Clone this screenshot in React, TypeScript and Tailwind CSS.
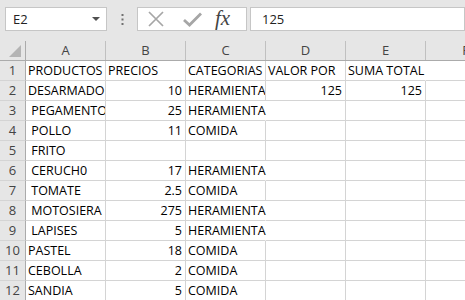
import React from "react";

type Cell = { t?: string; right?: boolean; clip?: boolean; noBorder?: boolean };

const rows: Cell[][] = [
  [{ t: "PRODUCTOS" }, { t: "PRECIOS" }, { t: "CATEGORIAS", clip: true }, { t: "VALOR POR" }, { t: "SUMA TOTAL", noBorder: true }, {}],
  [{ t: "DESARMADOR", clip: true }, { t: "10", right: true }, { t: "HERAMIENTA", clip: true }, { t: "125", right: true }, { t: "125", right: true }, {}],
  [{ t: " PEGAMENTO", clip: true }, { t: "25", right: true }, { t: "HERAMIENTA", noBorder: true }, {}, {}, {}],
  [{ t: " POLLO" }, { t: "11", right: true }, { t: "COMIDA" }, {}, {}, {}],
  [{ t: " FRITO" }, {}, {}, {}, {}, {}],
  [{ t: " CERUCH0" }, { t: "17", right: true }, { t: "HERAMIENTA", noBorder: true }, {}, {}, {}],
  [{ t: " TOMATE" }, { t: "2.5", right: true }, { t: "COMIDA" }, {}, {}, {}],
  [{ t: " MOTOSIERA" }, { t: "275", right: true }, { t: "HERAMIENTA", noBorder: true }, {}, {}, {}],
  [{ t: " LAPISES" }, { t: "5", right: true }, { t: "HERAMIENTA", noBorder: true }, {}, {}, {}],
  [{ t: "PASTEL" }, { t: "18", right: true }, { t: "COMIDA" }, {}, {}, {}],
  [{ t: "CEBOLLA" }, { t: "2", right: true }, { t: "COMIDA" }, {}, {}, {}],
  [{ t: "SANDIA" }, { t: "5", right: true }, { t: "COMIDA" }, {}, {}, {}],
];

const cols = ["A", "B", "C", "D", "E", "F"];

export default function App() {
  return (
    <div
      className="w-[465px] h-[300px] overflow-hidden bg-[#e6e6e6] text-[#000]"
      style={{ fontFamily: '"Open Sans", "Noto Sans", sans-serif' }}
    >
      {/* Formula bar */}
      <div className="h-[41px] flex items-start pt-[7px]">
        <div className="ml-[5px] w-[102px] h-[24px] bg-white border border-[#c6c6c6] flex items-center justify-between pl-[7px] pr-[6px]">
          <span className="text-[13px] leading-none text-[#222]">E2</span>
          <svg width="8" height="5" viewBox="0 0 8 5">
            <path d="M0 0 L8 0 L4 4 Z" fill="#505050" />
          </svg>
        </div>
        <div className="w-[30px] h-[24px] flex items-center justify-center">
          <svg width="3" height="11" viewBox="0 0 3 11">
            <rect x="0.5" y="0" width="2" height="2" fill="#707070" />
            <rect x="0.5" y="4.5" width="2" height="2" fill="#707070" />
            <rect x="0.5" y="9" width="2" height="2" fill="#707070" />
          </svg>
        </div>
        <div className="w-[110px] h-[24px] bg-white border border-[#c6c6c6] flex items-center">
          <svg className="ml-[10px]" width="16" height="16" viewBox="0 0 16 16">
            <path d="M1 1 L15 15 M15 1 L1 15" stroke="#a6a6a6" strokeWidth="1.7" fill="none" />
          </svg>
          <svg className="ml-[19px]" width="19" height="15" viewBox="0 0 19 15">
            <path d="M1 8 L6.5 13 L18 1.5" stroke="#a6a6a6" strokeWidth="2.8" fill="none" />
          </svg>
          <span
            className="ml-[13px] text-[21px] leading-none italic text-[#444] -mt-[2px]"
            style={{ fontFamily: '"Liberation Serif", serif' }}
          >
            fx
          </span>
        </div>
        <div className="ml-[3px] flex-1 h-[24px] bg-white border border-[#c6c6c6] flex items-center pl-[11px]">
          <span className="text-[13px] leading-none text-[#222]">125</span>
        </div>
      </div>

      {/* Header row */}
      <div className="flex h-[20px] border-b border-[#ababab]">
        <div className="w-[26px] shrink-0 border-r border-[#ababab] relative">
          <svg className="absolute right-[4px] bottom-[3px]" width="12" height="12" viewBox="0 0 12 12">
            <path d="M12 0 L12 12 L0 12 Z" fill="#b4b4b4" />
          </svg>
        </div>
        {cols.map((c) => (
          <div
            key={c}
            className="w-[80px] shrink-0 border-r border-[#c0c0c0] flex items-center justify-center text-[13px] text-[#444]"
          >
            {c}
          </div>
        ))}
      </div>

      {/* Rows */}
      {rows.map((r, i) => (
        <div key={i} className="flex h-[20px]">
          <div className="w-[26px] shrink-0 h-[20px] border-r border-b border-r-[#ababab] border-b-[#d4d4d4] flex items-center justify-center text-[13px] text-[#444]">
            {i + 1}
          </div>
          {r.map((cell, j) => (
            <div
              key={j}
              className={
                "w-[80px] shrink-0 h-[20px] bg-white border-b border-r border-b-[#d4d4d4] flex items-center text-[12.5px] whitespace-pre " +
                (cell.noBorder ? "border-r-white " : "border-r-[#d4d4d4] ") +
                (cell.clip ? "overflow-hidden " : "overflow-visible ") +
                (cell.right ? "justify-end pr-[3px] " : "pl-[2px] ")
              }
            >
              {cell.t ? <span className="relative z-10 leading-none pt-[1px]">{cell.t}</span> : null}
            </div>
          ))}
        </div>
      ))}
    </div>
  );
}
